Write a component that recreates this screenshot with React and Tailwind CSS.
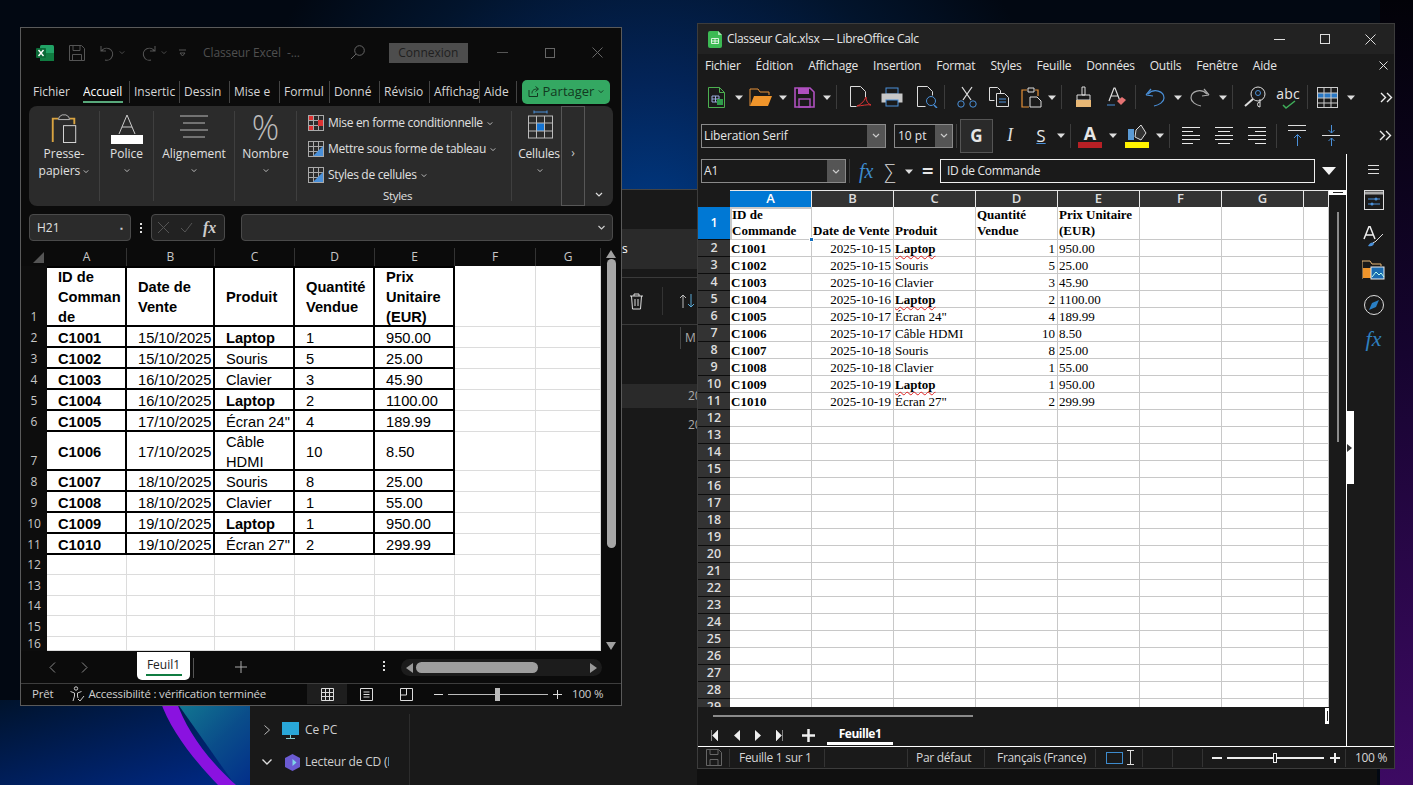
import React from 'react';

const S = ({ w = 16, h = 16, vb, children, className = '' }) => (
  <svg width={w} height={h} viewBox={vb || `0 0 ${w} ${h}`} fill="none" className={`shrink-0 ${className}`}>{children}</svg>
);

const Chev = ({ c = '#bbb', w = 7 }) => (
  <S w={w} h={5} vb="0 0 8 5"><path d="M1 1l3 3 3-3" stroke={c} strokeWidth="1.2" /></S>
);
const Tri = ({ c = '#ddd' }) => (
  <S w={8} h={5} vb="0 0 8 5"><path d="M0 .5h8L4 5z" fill={c} /></S>
);
const Sep = ({ className = '' }) => <div className={`w-px h-[24px] bg-[#3c3c3c] shrink-0 ${className}`} />;

/* ---------- Excel ---------- */
const xTabs = [
  ['Fichier', 'w-[50px] pl-[12px]'],
  ['Accueil', 'w-[58px] pl-[12px]'],
];
const xTabsRest = [
  ['Insertic', 'w-[50px]'], ['Dessin', 'w-[50px]'], ['Mise e', 'w-[50px]'], ['Formul', 'w-[50px]'],
  ['Donné', 'w-[50px]'], ['Révisio', 'w-[50px]'], ['Affichag', 'w-[50px]'], ['Aide', 'w-[37px]'],
];
const xRows = [
  ['C1001', '15/10/2025', 'Laptop', '1', '950.00', 1],
  ['C1002', '15/10/2025', 'Souris', '5', '25.00'],
  ['C1003', '16/10/2025', 'Clavier', '3', '45.90'],
  ['C1004', '16/10/2025', 'Laptop', '2', '1100.00', 1],
  ['C1005', '17/10/2025', 'Écran 24"', '4', '189.99'],
  ['C1006', '17/10/2025', 'Câble HDMI', '10', '8.50'],
  ['C1007', '18/10/2025', 'Souris', '8', '25.00'],
  ['C1008', '18/10/2025', 'Clavier', '1', '55.00'],
  ['C1009', '19/10/2025', 'Laptop', '1', '950.00', 1],
  ['C1010', '19/10/2025', 'Écran 27"', '2', '299.99'],
];

function XHead({ children }) {
  return <div className="flex items-center justify-center text-[12px] text-[#c8c8c8] border-r border-[#333]">{children}</div>;
}
function XRowHead({ n, end }) {
  return (
    <div className={`flex justify-center text-[12px] text-[#c8c8c8] bg-[#0d0d0d] ${end ? 'items-end pb-[1px]' : 'items-center'}`}>{n}</div>
  );
}
function XCell({ children, first, top, bold }) {
  return (
    <div className={`flex items-center bg-white text-black font-['Liberation_Sans',Arial,sans-serif] text-[14.67px] leading-[20px] border-r-2 border-b-2 border-black pl-[11px] ${first ? 'pr-0' : 'pr-[2px]'} ${top ? 'border-t-2' : 'pt-[2px]'} ${bold ? 'font-bold' : ''}`}>
      <span className="block">{children}</span>
    </div>
  );
}
const XEmpty = () => <div className="bg-white border-r border-b border-[#dcdcdc]" />;

function ExcelGrid() {
  return (
    <div className="grid grid-cols-[26px_80px_88px_80px_80px_80px_81px_65px] grid-rows-[18px_61px_21px_21px_21px_21px_21px_39px_21px_21px_21px_21px_20px_21px_20px_21px_14px] h-[404px] overflow-hidden shrink-0">
      <div className="flex items-end justify-end pr-[2px] pb-[2px]"><S w={13} h={13}><path d="M12 1v11H1z" fill="#555" /></S></div>
      {['A', 'B', 'C', 'D', 'E', 'F', 'G'].map((l) => <XHead key={l}>{l}</XHead>)}

      <XRowHead n="1" end />
      <XCell first top bold>ID de<br />Comman<br />de</XCell>
      <XCell top bold>Date de<br />Vente</XCell>
      <XCell top bold>Produit</XCell>
      <XCell top bold>Quantité<br />Vendue</XCell>
      <XCell top bold>Prix<br />Unitaire<br />(EUR)</XCell>
      <XEmpty /><XEmpty />
      {xRows.map((r, i) => (
        <React.Fragment key={r[0]}>
          <XRowHead n={i + 2} end={i === 5} />
          <XCell first bold>{r[0]}</XCell>
          <XCell>{r[1]}</XCell>
          <XCell bold={r[5] === 1}>{r[2] === 'Câble HDMI' ? <>Câble<br />HDMI</> : r[2]}</XCell>
          <XCell>{r[3]}</XCell>
          <XCell>{r[4]}</XCell>
          <XEmpty /><XEmpty />
        </React.Fragment>
      ))}
      {[12, 13, 14, 15, 16].map((n) => (
        <React.Fragment key={n}>
          <XRowHead n={n} />
          <XEmpty /><XEmpty /><XEmpty /><XEmpty /><XEmpty /><XEmpty /><XEmpty />
        </React.Fragment>
      ))}
    </div>
  );
}

function Excel() {
  return (
    <div className="absolute left-[20px] top-[27px] w-[602px] h-[679px] bg-[#0b0b0b] border border-[#5a5a5a] flex flex-col overflow-hidden">
      {/* Title bar */}
      <div className="h-[49px] shrink-0 flex items-center pl-[15px] text-[#4f4f4f]">
        <S w={18} h={18}>
          <rect x="4" y="1" width="14" height="16" rx="1.5" fill="#21a366" />
          <rect x="4" y="9" width="14" height="8" fill="#107c41" />
          <rect x="0" y="4" width="10" height="10" rx="1" fill="#0b6a37" />
          <path d="M2.500 6l5 6M7.500 6l-5 6" stroke="#fff" strokeWidth="1.4" />
        </S>
        <S w={16} h={16} className="ml-[15px]">
          <path d="M.5.500h12l3 3v12H.5zM4 .5v5h7v-5M3.500 15.500V9.500h9v6" stroke="#555" />
        </S>
        <S w={14} h={16} className="ml-[15px]">
          <path d="M1 1v5h5M1.500 6A6 6 0 1 1 5 15" stroke="#555" strokeWidth="1.1" />
        </S>
        <span className="ml-[5px]"><Chev c="#555" w={6} /></span>
        <S w={14} h={16} className="ml-[17px]">
          <path d="M13 1v5H8M12.500 6A6 6 0 1 0 9 15" stroke="#555" strokeWidth="1.1" />
        </S>
        <span className="ml-[5px]"><Chev c="#555" w={6} /></span>
        <S w={7} h={8} className="ml-[12px]"><path d="M0 1h7M1 4h5l-2.500 3z" stroke="#555" /></S>
        <span className="ml-[17px] text-[12px] tracking-[-0.1px]">Classeur Excel&nbsp;&nbsp;-...</span>
        <S w={15} h={15} className="ml-[50px]"><circle cx="9.500" cy="5.500" r="4.800" stroke="#666" /><path d="M6 9l-5 5" stroke="#666" /></S>
        <div className="ml-[24px] w-[79px] h-[20px] bg-[#4d4d4d] flex items-center justify-center text-[12px] text-[#1f1f1f]">Connexion</div>
        <div className="ml-[29px] w-[11px] h-px bg-[#555]" />
        <div className="ml-[37px] w-[10px] h-[10px] border border-[#666]" />
        <S w={11} h={11} className="ml-[37px]"><path d="M.5.500l10 10M10.500.500l-10 10" stroke="#666" /></S>
      </div>
      {/* Tabs */}
      <div className="h-[29px] shrink-0 flex items-center text-[12px] text-[#d6d6d6]">
        {xTabs.map(([t, c], i) => (
          <div key={t} className={`${c} h-[24px] flex items-center relative ${i === 1 ? 'text-white font-medium' : ''}`}>
            <span className="overflow-hidden whitespace-nowrap">{t}</span>
            {i === 1 && <div className="absolute left-[12px] right-[6px] bottom-[1px] h-[2px] bg-[#58a97b]" />}
          </div>
        ))}
        {xTabsRest.map(([t, c]) => (
          <div key={t} className={`${c} h-[22px] flex items-center border-l border-[#444] pl-[4px] overflow-hidden whitespace-nowrap`}>{t}</div>
        ))}
        <div className="w-px h-[22px] bg-[#444]" />
        <div className="ml-[5px] w-[88px] h-[24px] bg-[#34a862] rounded-[5px] flex items-center justify-center gap-[4px] text-[#123820] text-[13px]">
          <S w={11} h={11}><path d="M1 4v6.500h8.500V7M4 7.500C4 4 6 3 10 3M7.500.500L10.500 3 7.500 5.500" stroke="#123820" /></S>
          Partager
          <Chev c="#123820" w={6} />
        </div>
      </div>
      {/* Ribbon */}
      <div className="mx-[8px] h-[100px] shrink-0 bg-[#2b2b2b] rounded-[8px] flex relative text-[12px] text-[#e0e0e0]">
        <div className="w-[71px] flex flex-col items-center pt-[2px] border-r border-[#3f3f3f] my-[5px]">
          <S w={28} h={30} vb="0 0 28 32">
            <path d="M2 31V6h6M20 6h5v6" stroke="#d9a441" strokeWidth="2" />
            <path d="M8 7l1-3 3-2h4l3 2 1 3z" stroke="#bbb" fill="#2b2b2b" />
            <rect x="13.500" y="13.500" width="13" height="18" stroke="#ddd" fill="#2b2b2b" />
          </S>
          <div className="mt-[2px] text-center leading-[17px]">Presse-<br />papiers <span className="inline-block align-middle"><Chev c="#ccc" w={6} /></span></div>
        </div>
        <div className="w-[54px] flex flex-col items-center pt-[3px] border-r border-[#3f3f3f] my-[5px]">
          <S w={32} h={30}>
            <path d="M8 20L16 1l8 19M11 13h10" stroke="#ccc" />
            <rect x="0" y="21" width="32" height="9" fill="#fff" />
          </S>
          <div className="mt-[1px] leading-[17px]">Police</div>
          <div className="mt-[6px]"><Chev c="#ccc" w={6} /></div>
        </div>
        <div className="w-[81px] flex flex-col items-center pt-[4px] border-r border-[#3f3f3f] my-[5px]">
          <S w={28} h={29}>
            <path d="M0 1h28M3 8h22M0 15h28M3 22h22" stroke="#bbb" />
          </S>
          <div className="mt-[1px] leading-[17px]">Alignement</div>
          <div className="mt-[6px]"><Chev c="#ccc" w={6} /></div>
        </div>
        <div className="w-[62px] flex flex-col items-center border-r border-[#3f3f3f] my-[5px]">
          <div className="h-[33px] text-[34px] leading-[33px] font-light text-[#bbb]">%</div>
          <div className="mt-[1px] leading-[17px]">Nombre</div>
          <div className="mt-[6px]"><Chev c="#ccc" w={6} /></div>
        </div>
        <div className="w-[215px] flex flex-col border-r border-[#3f3f3f] my-[5px] pl-[11px] tracking-[-0.3px]">
          {[
            ['Mise en forme conditionnelle', '#d33', '-mt-[1px]'],
            ['Mettre sous forme de tableau', '#4a90d9', ''],
            ['Styles de cellules', '#4a90d9', ''],
          ].map(([t, col, cl], i) => (
            <div key={t} className={`h-[26px] shrink-0 flex items-center gap-[4px] whitespace-nowrap ${cl}`}>
              <S w={16} h={16}>
                <rect x=".5" y=".5" width="15" height="15" stroke="#aaa" />
                <path d="M5.500 1v14M10.500 1v14M1 5.500h14M1 10.500h14" stroke="#aaa" />
                {i === 0 ? <path d="M1 1h4v4H1zM1 11h4v4H1zM10 5h5v6h-5z" fill={col} /> : <path d="M5 15L15 5v10z" fill={col} />}
              </S>
              <span>{t}</span>
              <Chev c="#ccc" w={6} />
            </div>
          ))}
          <div className="text-center leading-[14px] text-[11.5px] mt-[1px] pr-[24px]">Styles</div>
        </div>
        <div className="w-[50px] flex flex-col items-center pt-[4px] pl-[6px]">
          <S w={25} h={30}>
            <path d="M6 2h13M6 .5v3M19 .5v3" stroke="#4a90d9" />
            <rect x=".5" y="6" width="24" height="22" fill="#2b2b2b" stroke="#bbb" />
            <rect x="8" y="13" width="9" height="8" fill="#1474d4" />
            <path d="M8.500 6v22M16.500 6v22M0 13h25M0 21h25" stroke="#bbb" />
          </S>
          <div className="mt-[5px] -ml-[2px] leading-[17px] tracking-[-0.2px]">Cellules</div>
          <div className="mt-[6px]"><Chev c="#ccc" w={6} /></div>
        </div>
        <div className="w-[24px] -ml-[1px] h-full border border-[#575757] flex items-center justify-center text-[#ccc] text-[12px] pb-[6px] z-10">›</div>
        <div className="flex-1 flex items-end justify-center pb-[9px]"><Chev c="#ddd" w={10} /></div>
      </div>
      {/* Formula bar */}
      <div className="h-[27px] mt-[8px] shrink-0 flex items-center pl-[8px] text-[12px] text-[#e0e0e0]">
        <div className="w-[102px] h-[27px] bg-[#2b2b2b] border border-[#4a4a4a] rounded-[4px] flex items-center px-[7px] justify-between">
          H21 <span className="text-[8px] text-[#ccc]">▪</span>
        </div>
        <div className="w-[20px] flex flex-col items-center gap-[2px]">
          <div className="w-[2px] h-[2px] bg-[#ddd]" /><div className="w-[2px] h-[2px] bg-[#ddd]" /><div className="w-[2px] h-[2px] bg-[#ddd]" />
        </div>
        <div className="w-[74px] h-[27px] bg-[#222] border border-[#4a4a4a] rounded-[4px] flex items-center pl-[5px] gap-[10px]">
          <S w={13} h={13}><path d="M1 1l11 11M12 1L1 12" stroke="#555" /></S>
          <S w={13} h={13}><path d="M1 7l4 4 7-9" stroke="#555" /></S>
          <span className="font-['Liberation_Serif',serif] italic font-bold text-[16px] leading-none text-[#ccc]">fx</span>
        </div>
        <div className="ml-[16px] w-[372px] h-[27px] bg-[#2b2b2b] border border-[#4a4a4a] rounded-[4px] flex items-center justify-end pr-[6px]">
          <Chev c="#ccc" w={9} />
        </div>
      </div>
      {/* Sheet */}
      <div className="mt-[7px] flex shrink-0">
        <ExcelGrid />
        <div className="w-[20px] flex flex-col items-center pt-[2px]">
          <S w={10} h={8}><path d="M5 0l5 8H0z" fill="#a0a0a0" /></S>
          <div className="w-[9px] h-[289px] mt-[1px] bg-[#a6a6a6] rounded-full" />
          <div className="flex-1" />
          <S w={10} h={8} className="mb-[2px]"><path d="M5 8L0 0h10z" fill="#a0a0a0" /></S>
        </div>
      </div>
      {/* Sheet tabs */}
      <div className="h-[31px] shrink-0 flex items-start text-[#aaa] relative">
        <div className="ml-[28px] mt-[10px] flex gap-[25px]">
          <S w={7} h={11}><path d="M6 .5L1 5.500l5 5" stroke="#888" /></S>
          <S w={7} h={11}><path d="M1 .5l5 5-5 5" stroke="#888" /></S>
        </div>
        <div className="ml-[49px] w-[53px] h-[28px] bg-white rounded-b-[5px] flex flex-col items-center pt-[3px] text-[12px] font-medium text-[#222]">
          <span className="leading-[18px] mt-[1px]">Feuil1</span>
          <div className="w-[36px] h-[2px] bg-[#107c41]" />
        </div>
        <div className="ml-[3px] mt-[6px] w-px h-[20px] bg-[#555]" />
        <S w={12} h={12} className="ml-[41px] mt-[9px]"><path d="M6 0v12M0 6h12" stroke="#aaa" /></S>
        <div className="ml-[136px] mt-[9px] flex flex-col gap-[2px]">
          <div className="w-[2px] h-[2px] bg-[#ddd]" /><div className="w-[2px] h-[2px] bg-[#ddd]" /><div className="w-[2px] h-[2px] bg-[#ddd]" />
        </div>
        <div className="ml-[16px] mt-[7px] w-[201px] h-[17px] bg-[#1c1c1c] rounded-full flex items-center pl-[5px] pr-[5px]">
          <S w={7} h={10}><path d="M7 0v10L0 5z" fill="#999" /></S>
          <div className="ml-[3px] w-[122px] h-[11px] rounded-full bg-[#9e9e9e]" />
          <div className="flex-1" />
          <S w={7} h={10}><path d="M0 0v10l7-5z" fill="#999" /></S>
        </div>
      </div>
      {/* Status */}
      <div className="h-[21px] flex-1 border-t border-[#3d3d3d] flex items-center text-[11.5px] text-[#d0d0d0] relative pb-[1px] tracking-[-0.2px]">
        <span className="ml-[11px]">Prêt</span>
        <S w={15} h={16} className="ml-[17px]">
          <circle cx="6" cy="2.500" r="1.700" stroke="#ccc" />
          <path d="M.5 5.500l4 1.500v3l-1.500 5M11.500 5.500l-4 1.500v3l.5 2M8 13l2 2 4-5" stroke="#ccc" />
        </S>
        <span className="ml-[3px] whitespace-nowrap">Accessibilité : vérification terminée</span>
        <div className="ml-[41px] w-[40px] h-full bg-[#1e1e1e] flex items-center justify-center">
          <S w={13} h={13}><path d="M.5.500h12v12H.5zM4.500 1v12M8.500 1v12M1 4.500h12M1 8.500h12" stroke="#ddd" /></S>
        </div>
        <S w={13} h={13} className="ml-[13px]"><path d="M.5.500h12v12H.5zM3.500 4h6M3.500 6.500h6M3.500 9h6" stroke="#ddd" /></S>
        <S w={13} h={13} className="ml-[27px]"><path d="M.5.500h12v12H.5zM6.500 1v6h-6" stroke="#ddd" /></S>
        <div className="ml-[21px] w-[9px] h-px bg-[#ddd]" />
        <div className="ml-[5px] w-[100px] h-px bg-[#bbb] relative">
          <div className="absolute left-[47px] -top-[6px] w-[5px] h-[13px] bg-[#bbb]" />
        </div>
        <S w={9} h={9} className="ml-[5px]"><path d="M4.500 0v9M0 4.500h9" stroke="#ddd" /></S>
        <span className="ml-[10px] whitespace-nowrap">100 %</span>
      </div>
    </div>
  );
}

/* ---------- Calc ---------- */
const cRows = [
  ['C1001', '2025-10-15', 'Laptop', '1', '950.00', 1],
  ['C1002', '2025-10-15', 'Souris', '5', '25.00'],
  ['C1003', '2025-10-16', 'Clavier', '3', '45.90'],
  ['C1004', '2025-10-16', 'Laptop', '2', '1100.00', 1],
  ['C1005', '2025-10-17', 'Écran 24"', '4', '189.99'],
  ['C1006', '2025-10-17', 'Câble HDMI', '10', '8.50'],
  ['C1007', '2025-10-18', 'Souris', '8', '25.00'],
  ['C1008', '2025-10-18', 'Clavier', '1', '55.00'],
  ['C1009', '2025-10-19', 'Laptop', '1', '950.00', 1],
  ['C1010', '2025-10-19', 'Écran 27"', '2', '299.99'],
];
const CCell = ({ children, className = '' }) => (
  <div className={`bg-white border-r border-b border-[#c8c8c8] text-black text-[13px] leading-[15px] pl-[1px] pr-[2px] whitespace-nowrap overflow-visible flex items-end ${className}`}>
    {children}
  </div>
);
const CHead = ({ children, active }) => (
  <div className={`flex items-center justify-center text-[13px] font-semibold font-['Open_Sans',sans-serif] border-t border-r border-[#e8e8e8] ${active ? 'bg-[#0078d4] text-white' : 'bg-[#333] text-[#ddd]'}`}>{children}</div>
);
const CRowH = ({ n, active }) => (
  <div className={`flex items-center justify-center text-[12.5px] font-semibold font-['Open_Sans',sans-serif] border-b border-[#0d0d0d] ${active ? 'bg-[#0078d4] text-white' : 'bg-[#333] text-[#ddd]'}`}>{n}</div>
);

function CalcGrid() {
  const blank = [];
  for (let i = 12; i <= 29; i++) blank.push(i);
  return (
    <div className="grid grid-cols-[32px_82px_82px_82px_82px_82px_82px_82px_25px] grid-rows-[17px_33px_repeat(28,17px)] h-[517px] overflow-hidden w-[631px] shrink-0 font-['Liberation_Serif','Times_New_Roman',serif]">
      <div className="bg-[#1a1a1a]" />
      <CHead active>A</CHead>
      {['B', 'C', 'D', 'E', 'F', 'G', ''].map((l, i) => <CHead key={i}>{l}</CHead>)}
      <CRowH n="1" active />
      <CCell className="font-bold relative border-2 border-[#0f6cbd] pl-0">
        <span className="leading-[16px] -ml-[1px]">ID de<br />Commande</span>
        <div className="absolute -right-[3px] -bottom-[3px] w-[5px] h-[5px] bg-[#0f6cbd] border border-white z-10" />
      </CCell>
      <CCell className="font-bold"><span className="leading-[16px]">Date de Vente</span></CCell>
      <CCell className="font-bold"><span className="leading-[16px]">Produit</span></CCell>
      <CCell className="font-bold"><span className="leading-[16px]">Quantité<br />Vendue</span></CCell>
      <CCell className="font-bold"><span className="leading-[16px]">Prix Unitaire<br />(EUR)</span></CCell>
      <CCell /><CCell /><CCell />
      {cRows.map((r, i) => (
        <React.Fragment key={r[0]}>
          <CRowH n={i + 2} />
          <CCell className="font-bold">{r[0]}</CCell>
          <CCell className="justify-end">{r[1]}</CCell>
          <CCell className={r[5] ? 'font-bold relative z-10 bg-transparent' : ''}>
            {r[5] ? <span className="underline decoration-wavy decoration-[#e02020] decoration-1 [text-decoration-skip-ink:none] underline-offset-[2px]">{r[2]}</span> : r[2]}
          </CCell>
          <CCell className="justify-end">{r[3]}</CCell>
          <CCell>{r[4]}</CCell>
          <CCell /><CCell /><CCell />
        </React.Fragment>
      ))}
      {blank.map((n) => (
        <React.Fragment key={n}>
          <CRowH n={n} />
          <CCell /><CCell /><CCell /><CCell /><CCell /><CCell /><CCell /><CCell />
        </React.Fragment>
      ))}
    </div>
  );
}

const Align = ({ kind }) => {
  const d = {
    l: 'M0 .5h18M0 4.500h11M0 8.500h18M0 12.500h18M0 16.500h11',
    c: 'M0 .5h18M3 4.500h12M0 8.500h18M0 12.500h18M3 16.500h12',
    r: 'M0 .5h18M7 4.500h11M0 8.500h18M0 12.500h18M7 16.500h11',
  }[kind];
  return <S w={18} h={17}><path d={d} stroke="#e8e8e8" /></S>;
};

function Calc() {
  return (
    <div className="absolute left-[697px] top-[23px] w-[698px] h-[746px] bg-[#1a1a1a] border border-[#3c3c3c] flex flex-col overflow-hidden text-[#e6e6e6]">
      {/* Title */}
      <div className="h-[30px] bg-[#222] shrink-0 flex items-center pl-[10px] text-[12px]">
        <S w={14} h={17}>
          <path d="M0 2a2 2 0 0 1 2-2h8l4 4v11a2 2 0 0 1-2 2H2a2 2 0 0 1-2-2z" fill="#3cba54" />
          <path d="M10 0l4 4h-4z" fill="#a6e6b0" />
          <path d="M3.500 7.500h7v5h-7zM3.500 10h7M7 7.500v5" stroke="#fff" strokeWidth=".8" />
        </S>
        <span className="ml-[5px] tracking-[-0.33px]">Classeur Calc.xlsx — LibreOffice Calc</span>
        <div className="flex-1" />
        <div className="w-[11px] h-px bg-[#ddd]" />
        <div className="ml-[35px] w-[10px] h-[10px] border border-[#ddd]" />
        <S w={11} h={11} className="ml-[35px] mr-[18px]"><path d="M.5.500l10 10M10.500.500l-10 10" stroke="#ddd" /></S>
      </div>
      {/* Menu */}
      <div className="h-[23px] shrink-0 flex items-center text-[12px] pl-[7px] gap-[15px] tracking-[-0.2px] whitespace-nowrap">
        {['Fichier', 'Édition', 'Affichage', 'Insertion', 'Format', 'Styles', 'Feuille', 'Données', 'Outils', 'Fenêtre', 'Aide'].map((m) => <span key={m}>{m}</span>)}
        <div className="flex-1" />
        <S w={9} h={9} className="mr-[6px]"><path d="M.5.500l8 8M8.500.500l-8 8" stroke="#ddd" /></S>
      </div>
      {/* Toolbar 1 */}
      <div className="h-[38px] mt-[1px] shrink-0 flex items-center pl-[10px]">
        <S w={17} h={21}><path d="M.5.500h11l5 5v15H.5zM11.500.500v5h5" stroke="#4caf50" /><path d="M4 9h7v6H4zM4 12h7M7.500 9v6" stroke="#9ad" /><path d="M9 12h6v6H9z" fill="#2e9c4a" /></S>
        <span className="ml-[10px]"><Tri /></span>
        <S w={23} h={19} className="ml-[6px]"><path d="M1 18V1h8l2 3h9v3" stroke="#e69138" /><path d="M1 18l4-10h18l-4 10z" fill="#f0952b" /></S>
        <span className="ml-[7px]"><Tri /></span>
        <S w={21} h={21} className="ml-[7px]"><path d="M1 1h15l4 4v15H1z" stroke="#b050c0" strokeWidth="1.600" /><rect x="4" y="1" width="11" height="6" fill="#b050c0" /><rect x="5" y="12" width="11" height="8" stroke="#b050c0" strokeWidth="1.400" /></S>
        <span className="ml-[8px]"><Tri /></span>
        <Sep className="ml-[5px]" />
        <S w={22} h={22} className="ml-[13px]"><path d="M.5 20.500v-20h10l5 5v6M.5 20.500h6" stroke="#ddd" /><path d="M16 11c-2 5-6 8-9 9 4 0 11-2 14-1-3-1-5-4-5-8z" stroke="#d33" /></S>
        <S w={22} h={20} className="ml-[9px]"><rect x="5" y="1" width="12" height="6" stroke="#4a90d9" /><rect x=".5" y="6.500" width="21" height="9" fill="#c8c8c8" /><rect x="5" y="13" width="12" height="6" fill="#1a1a1a" stroke="#4a90d9" /></S>
        <S w={21} h={22} className="ml-[14px]"><path d="M.5 20.500v-20h10l5 5v4M.5 20.500h8" stroke="#ddd" /><circle cx="14" cy="15" r="4.500" stroke="#4a90d9" /><path d="M17 19l3 3" stroke="#4a90d9" strokeWidth="1.500" /></S>
        <Sep className="ml-[6px]" />
        <S w={20} h={22} className="ml-[12px]"><path d="M5 1l9 13M15 1L6 14" stroke="#ddd" strokeWidth="1.300" /><circle cx="4" cy="18" r="3.200" stroke="#4a90d9" /><circle cx="16" cy="18" r="3.200" stroke="#4a90d9" /></S>
        <S w={20} h={20} className="ml-[12px]"><path d="M.5.500h8l3 3v3M.5.500v13h5" stroke="#ddd" /><path d="M7.500 6.500h8l4 4v9h-12z" stroke="#ddd" /><path d="M10 12h7M10 15h7" stroke="#4a90d9" /></S>
        <S w={21} h={21} className="ml-[12px]"><path d="M6 3H1v17h7M14 3h3v6" stroke="#e69138" strokeWidth="1.200" /><path d="M7 1h6v4H7z" stroke="#ddd" /><path d="M9 10h7l4 4v6H9z" stroke="#ddd" /></S>
        <span className="ml-[6px]"><Tri /></span>
        <Sep className="ml-[5px]" />
        <S w={17} h={22} className="ml-[13px]"><path d="M7 1h3v8H7z" stroke="#ddd" /><path d="M2 9h13v5H2z" stroke="#ddd" /><path d="M1 14h15v7H1z" fill="#e8b876" /></S>
        <S w={19} h={20} className="ml-[15px]"><path d="M2 14L7 1h1l5 13M4 9h7" stroke="#ddd" strokeWidth="1.200" /><path d="M0 18h8" stroke="#4a90d9" /><path d="M10 14l5-4 4 3-5 5z" fill="#e57373" /></S>
        <Sep className="ml-[9px]" />
        <S w={20} h={20} className="ml-[9px]"><path d="M1 8l5-6M1 8l7 1" stroke="#4a90d9" strokeWidth="1.200" /><path d="M3 7c6-6 16-3 16 4 0 4-5 7-10 8" stroke="#4a90d9" strokeWidth="1.200" /></S>
        <span className="ml-[9px]"><Tri /></span>
        <S w={20} h={20} className="ml-[8px]"><path d="M19 8l-5-6M19 8l-7 1" stroke="#aaa" strokeWidth="1.200" /><path d="M17 7C11 1 1 4 1 11c0 4 5 7 10 8" stroke="#aaa" strokeWidth="1.200" /></S>
        <span className="ml-[9px]"><Tri /></span>
        <Sep className="ml-[5px]" />
        <S w={23} h={22} className="ml-[11px]"><circle cx="14" cy="8" r="7" stroke="#ddd" /><path d="M9 13l-8 7" stroke="#ddd" strokeWidth="2" /><circle cx="14" cy="7" r="2.500" stroke="#4a90d9" /><path d="M16 13v8M16 21a2.500 2.500 0 1 1 0-5" stroke="#ddd" /></S>
        <div className="ml-[9px] w-[24px] h-[24px] relative flex justify-center text-[14px] leading-[17px] tracking-[0.2px]">
          abc
          <S w={14} h={9} className="absolute left-[6px] bottom-0"><path d="M1 5l3 3 9-7" stroke="#3fae5a" strokeWidth="1.500" /></S>
        </div>
        <Sep className="ml-[7px]" />
        <S w={21} h={21} className="ml-[9px]"><rect x=".5" y=".5" width="20" height="20" stroke="#ccc" /><rect x="1" y="6" width="19" height="5" fill="#2a78c4" /><path d="M7 1v20M14 1v20M1 6h20M1 11h20M1 16h20" stroke="#ccc" /></S>
        <span className="ml-[9px]"><Tri /></span>
        <S w={13} h={11} className="ml-[25px]"><path d="M1 1l4.500 4.500L1 10M7 1l4.500 4.500L7 10" stroke="#eee" strokeWidth="1.400" /></S>
      </div>
      {/* Toolbar 2 */}
      <div className="h-[37px] mt-[1px] shrink-0 flex items-center pl-[3px] text-[12px]">
        <div className="w-[185px] h-[24px] border border-[#8a8a8a] flex items-center pl-[2px] justify-between tracking-[-0.1px]">
          Liberation Serif
          <div className="w-[18px] h-full bg-[#555] flex items-center justify-center"><Chev c="#ccc" w={8} /></div>
        </div>
        <div className="ml-[8px] w-[59px] h-[24px] border border-[#8a8a8a] flex items-center pl-[3px] justify-between">
          10 pt
          <div className="w-[17px] h-full bg-[#555] flex items-center justify-center"><Chev c="#ccc" w={8} /></div>
        </div>
        <Sep className="ml-[3px]" />
        <div className="ml-[3px] w-[33px] h-[34px] bg-[#2a2a2a] border border-[#555] flex items-center justify-center font-bold text-[17px]">G</div>
        <span className="ml-[12px] w-[10px] text-center font-['Liberation_Serif',serif] italic text-[18px] text-[#ddd]">I</span>
        <span className="ml-[19px] w-[14px] text-center text-[17px] leading-[18px] underline decoration-[#4a90d9]">S</span>
        <span className="ml-[9px]"><Tri /></span>
        <Sep className="ml-[5px]" />
        <div className="ml-[7px] w-[24px] h-[24px] flex flex-col items-center">
          <span className="h-[18px] text-[18px] leading-[18px] font-bold">A</span>
          <div className="w-[24px] h-[6px] bg-[#b72025]" />
        </div>
        <span className="ml-[7px]"><Tri /></span>
        <div className="ml-[8px] w-[24px] h-[24px] flex flex-col items-center">
          <S w={20} h={18}><path d="M1 5h6v11H1z" fill="#5b9bd5" /><path d="M9 6l5-5 5 8-5 7-6-3z" stroke="#ddd" fill="#333" /></S>
          <div className="w-[24px] h-[6px] bg-[#fff200]" />
        </div>
        <span className="ml-[7px]"><Tri /></span>
        <Sep className="ml-[5px]" />
        <div className="ml-[12px]"><Align kind="l" /></div>
        <div className="ml-[15px]"><Align kind="c" /></div>
        <div className="ml-[15px]"><Align kind="r" /></div>
        <Sep className="ml-[10px]" />
        <S w={19} h={22} className="ml-[11px]"><path d="M0 .5h18M0 5.500h18" stroke="#ddd" /><path d="M9.500 10v11M6 13l3.500-3.500L13 13" stroke="#4a90d9" /></S>
        <S w={19} h={22} className="ml-[15px]"><path d="M0 10.500h18" stroke="#ddd" /><path d="M9.500 0v8M6.500 5l3 3 3-3M9.500 21v-8M6.500 16l3-3 3 3" stroke="#4a90d9" /></S>
        <S w={13} h={11} className="ml-[38px]"><path d="M1 1l4.500 4.500L1 10M7 1l4.500 4.500L7 10" stroke="#eee" strokeWidth="1.400" /></S>
      </div>
      {/* Formula and body */}
      <div className="flex-1 flex min-h-0 relative">
        <div className="w-[649px] shrink-0 flex flex-col min-h-0 border-r border-white">
          <div className="h-[26px] mt-[4px] shrink-0 flex items-center pl-[3px] text-[12px]">
            <div className="w-[145px] h-[24px] border border-[#8a8a8a] flex items-center pl-[2px] justify-between">
              A1
              <div className="w-[18px] h-full bg-[#555] flex items-center justify-center"><Chev c="#ccc" w={8} /></div>
            </div>
            <Sep className="ml-[3px]" />
            <span className="ml-[9px] w-[16px] font-['Liberation_Serif',serif] italic text-[#3d8bcd] text-[20px] leading-none">fx</span>
            <span className="ml-[9px] w-[12px] text-[19px] leading-none font-light text-[#ddd]">∑</span>
            <span className="ml-[9px]"><Tri /></span>
            <span className="ml-[9px] w-[12px] text-[20px] font-bold leading-none">=</span>
            <div className="ml-[6px] w-[375px] h-[24px] border border-[#eee] flex items-center pl-[6px] tracking-[-0.3px]">ID de Commande</div>
            <S w={14} h={8} className="ml-[7px]"><path d="M0 0h14L7 8z" fill="#f4f4f4" /></S>
          </div>
          <div className="flex mt-[6px] shrink-0">
            <CalcGrid />
            <div className="flex-1 flex flex-col items-center relative">
              <div className="w-full h-[5px] bg-white flex items-center justify-center"><div className="w-[10px] h-px bg-[#222]" /></div>
              <div className="w-[2px] h-[230px] mt-[17px] bg-[#8a8a8a]" />
            </div>
          </div>
          <div className="h-[18px] shrink-0 flex relative">
            <div className="ml-[15px] mt-[8px] w-[260px] h-[2px] bg-[#8a8a8a]" />
            <div className="absolute left-[627px] top-[1px] w-[4px] h-[16px] bg-white flex items-center justify-center"><div className="w-px h-[10px] bg-[#222]" /></div>
          </div>
          <div className="flex-1 flex items-center relative min-h-[20px] pb-[1px]">
            <S w={7} h={11} className="ml-[13px]"><path d="M.5 0v11M7 0v11L1.500 5.500z" fill="#eee" stroke="#eee" strokeWidth=".5" /></S>
            <S w={6} h={11} className="ml-[16px]"><path d="M6 0v11L0 5.500z" fill="#eee" /></S>
            <S w={6} h={11} className="ml-[15px]"><path d="M0 0v11l6-5.500z" fill="#eee" /></S>
            <S w={7} h={11} className="ml-[15px]"><path d="M0 0v11l5.500-5.500zM6.500 0v11" fill="#eee" stroke="#eee" strokeWidth=".5" /></S>
            <S w={13} h={13} className="ml-[19px]"><path d="M6.500 0v13M0 6.500h13" stroke="#f0f0f0" strokeWidth="2.500" /></S>
            <div className="ml-[12px] w-[66px] h-full border-b-[3px] border-white flex items-center justify-center text-[12px] font-bold text-white tracking-[-0.5px]">Feuille1</div>
          </div>
        </div>
        {/* Sidebar */}
        <div className="flex-1 flex flex-col items-center pt-[8px] pl-[6px] relative">
          <S w={11} h={10} className="mt-[3px]"><path d="M0 .5h11M0 4.500h11M0 8.500h11" stroke="#ddd" /></S>
          <S w={20} h={20} className="mt-[15px]"><rect x=".5" y=".5" width="19" height="19" stroke="#ddd" /><path d="M1 3h18" stroke="#aaa" strokeWidth="3" /><path d="M4 9h12M4 14h12" stroke="#4a90d9" /><circle cx="12" cy="9" r="1.500" fill="#4a90d9" /><circle cx="8" cy="14" r="1.500" fill="#4a90d9" /></S>
          <S w={21} h={22} className="mt-[16px]"><path d="M1 13L6 .5h1l5 12.500M3 9h7" stroke="#eee" strokeWidth="1.500" /><path d="M8 20c1-3 3-4 4-4l8-8" stroke="#ddd" /><path d="M5 20c2-4 5-4 6-3 0 2-2 4-6 3z" fill="#4a90d9" /></S>
          <S w={23} h={20} className="mt-[12px]"><path d="M0 19V1h8l2 3h9v2" stroke="#e8b876" /><path d="M1 18V8h20v1H9v9z" fill="#f0952b" /><rect x="9" y="7" width="13" height="12" fill="#1a6bb0" stroke="#eee" /><path d="M10 17l4-5 3 3 2-2 3 4" stroke="#bfe" /></S>
          <S w={20} h={20} className="mt-[15px]"><circle cx="10" cy="10" r="9.500" stroke="#ddd" /><path d="M15 5l-7 3-3 7 7-3z" fill="#2a7fc4" /></S>
          <span className="mt-[12px] font-['Liberation_Serif',serif] italic text-[#2f80c0] text-[22px] leading-[24px]">fx</span>
          <div className="absolute left-0 top-[257px] w-[7px] h-[73px] bg-white flex items-center"><S w={5} h={8}><path d="M0 0l5 4-5 4z" fill="#333" /></S></div>
        </div>
      </div>
      {/* Status */}
      <div className="h-[22px] shrink-0 border-t border-white flex items-center text-[12px] text-[#d6d6d6] whitespace-nowrap tracking-[-0.3px]">
        <S w={16} h={17} className="ml-[8px]"><path d="M.5.500h12l3 3v13H.5zM4 .5v5h8v-5M4 16.500v-6h8v6" stroke="#666" /></S>
        <div className="ml-[7px] w-px h-[18px] bg-[#333]" />
        <span className="ml-[9px] w-[85px]">Feuille 1 sur 1</span>
        <div className="w-px h-[18px] bg-[#333]" />
        <div className="ml-[82px] w-px h-[18px] bg-[#333]" />
        <span className="ml-[8px] w-[68px]">Par défaut</span>
        <div className="w-px h-[18px] bg-[#333]" />
        <span className="ml-[12px] w-[98px]">Français (France)</span>
        <div className="w-px h-[18px] bg-[#333]" />
        <div className="ml-[10px] w-[17px] h-[12px] border border-[#3d8bcd]" />
        <S w={7} h={15} className="ml-[4px]"><path d="M0 .5h7M0 14.500h7M3.500 1v13" stroke="#ddd" /></S>
        <div className="ml-[8px] w-px h-[18px] bg-[#333]" />
        <div className="ml-[29px] w-px h-[18px] bg-[#333]" />
        <div className="ml-[29px] w-px h-[18px] bg-[#333]" />
        <div className="ml-[9px] w-[10px] h-[2px] bg-[#eee]" />
        <div className="ml-[5px] w-[97px] h-[2px] bg-[#eee] relative">
          <div className="absolute left-[46px] -top-[4px] w-[4px] h-[10px] bg-[#1a1a1a] border border-[#eee]" />
        </div>
        <S w={10} h={10} className="ml-[6px]"><path d="M5 0v10M0 5h10" stroke="#eee" strokeWidth="2" /></S>
        <div className="ml-[5px] w-px h-[18px] bg-[#333]" />
        <span className="ml-[9px]">100 %</span>
      </div>
    </div>
  );
}

function Explorer() {
  return (
    <div className="absolute left-[250px] top-[189px] w-[520px] h-[596px] bg-[#191919] border-t border-[#444] flex flex-col text-[#cfcfcf] text-[12px]">
      <div className="h-[39px] shrink-0" />
      <div className="h-[40px] shrink-0 bg-[#2a2a2a] pl-[372px] flex items-center text-white">s</div>
      <div className="h-[48px] mt-[8px] shrink-0 border-t border-b border-[#3a3a3a] flex items-center pl-[379px]">
        <S w={15} h={17}><path d="M1 3h13M5 3V1h5v2M2.500 3l1 13h8l1-13M6 6v7M9 6v7" stroke="#ddd" /></S>
        <div className="ml-[18px] w-px h-[28px] bg-[#333]" />
        <S w={16} h={14} className="ml-[16px]"><path d="M4 14V1M1 4l3-3 3 3" stroke="#bbb" /><path d="M12 0v13M9 10l3 3 3-3" stroke="#5aa9d6" /></S>
      </div>
      <div className="h-[25px] shrink-0 pl-[430px] flex items-center"><div className="w-px h-[22px] bg-[#444] mr-[4px]" /><span className="text-[#aaa]">M</span></div>
      <div className="h-[34px] shrink-0" />
      <div className="h-[24px] shrink-0 bg-[#2a2a2a] pl-[438px] flex items-center text-[#aaa]">20</div>
      <div className="h-[7px] shrink-0" />
      <div className="h-[20px] shrink-0 pl-[438px] flex items-center text-[#aaa]">20</div>
      <div className="h-[279px] shrink-0" />
      <div className="flex flex-col w-[160px] border-r border-[#2c2c2c] flex-1 pl-[14px]">
        <div className="h-[32px] flex items-center">
          <S w={6} h={10}><path d="M.5.500l5 4.500-5 4.500" stroke="#bbb" /></S>
          <S w={17} h={17} className="ml-[12px]"><rect x="0" y="0" width="17" height="13" fill="#29a7d8" /><path d="M8.500 13v3M4 16.500h9" stroke="#8cc" /></S>
          <span className="ml-[6px]">Ce PC</span>
        </div>
        <div className="h-[32px] flex items-center">
          <S w={10} h={6} className="-ml-[2px]"><path d="M.5.500L5 5 9.500.500" stroke="#ddd" strokeWidth="1.400" /></S>
          <S w={15} h={17} className="ml-[13px]"><path d="M7.500 0L15 4v9l-7.500 4L0 13V4z" fill="#6b5bd2" /><path d="M7.500 5l4 3.500-4 3.500z" fill="#7fd4ea" /></S>
          <span className="ml-[5px] w-[84px] tracking-[-0.2px] overflow-hidden whitespace-nowrap">Lecteur de CD (D:)</span>
        </div>
      </div>
    </div>
  );
}

export default function App() {
  return (
    <div className="relative w-[1413px] h-[785px] overflow-hidden bg-[#030610] font-['Open_Sans',sans-serif]">
      <svg width="1413" height="785" className="absolute inset-0">
        <defs>
          <radialGradient id="blue" gradientUnits="userSpaceOnUse" cx="650" cy="230" r="420">
            <stop offset="0" stopColor="#003a85" />
            <stop offset=".35" stopColor="#032458" />
            <stop offset=".7" stopColor="#02142c" />
            <stop offset="1" stopColor="#020812" />
          </radialGradient>
          <linearGradient id="right" x1="0" y1="0" x2="0" y2="1">
            <stop offset="0" stopColor="#020208" />
            <stop offset=".45" stopColor="#16042f" />
            <stop offset="1" stopColor="#3d0a63" />
          </linearGradient>
          <linearGradient id="low" x1="0" y1="0" x2="1" y2="1">
            <stop offset="0" stopColor="#00132c" />
            <stop offset="1" stopColor="#002a8a" />
          </linearGradient>
          <linearGradient id="teal" x1="0" y1="0" x2="1" y2="1">
            <stop offset="0" stopColor="#127c92" />
            <stop offset=".5" stopColor="#0a4d8a" />
            <stop offset="1" stopColor="#012a8a" />
          </linearGradient>
        </defs>
        <rect width="1413" height="785" fill="url(#blue)" />
        <rect x="1380" width="33" height="785" fill="url(#right)" />
        <rect y="700" width="260" height="85" fill="url(#low)" />
        <path d="M175 700h85v85h-25z" fill="url(#teal)" />
        <path d="M160 700h16c10 30 32 60 60 85h-18c-24-25-48-55-58-85z" fill="#8a12e0" />
      </svg>
      <Explorer />
      <div className="absolute left-[697px] top-[768px] w-[680px] h-[17px] bg-[#101010]" />
      <Excel />
      <Calc />
    </div>
  );
}
